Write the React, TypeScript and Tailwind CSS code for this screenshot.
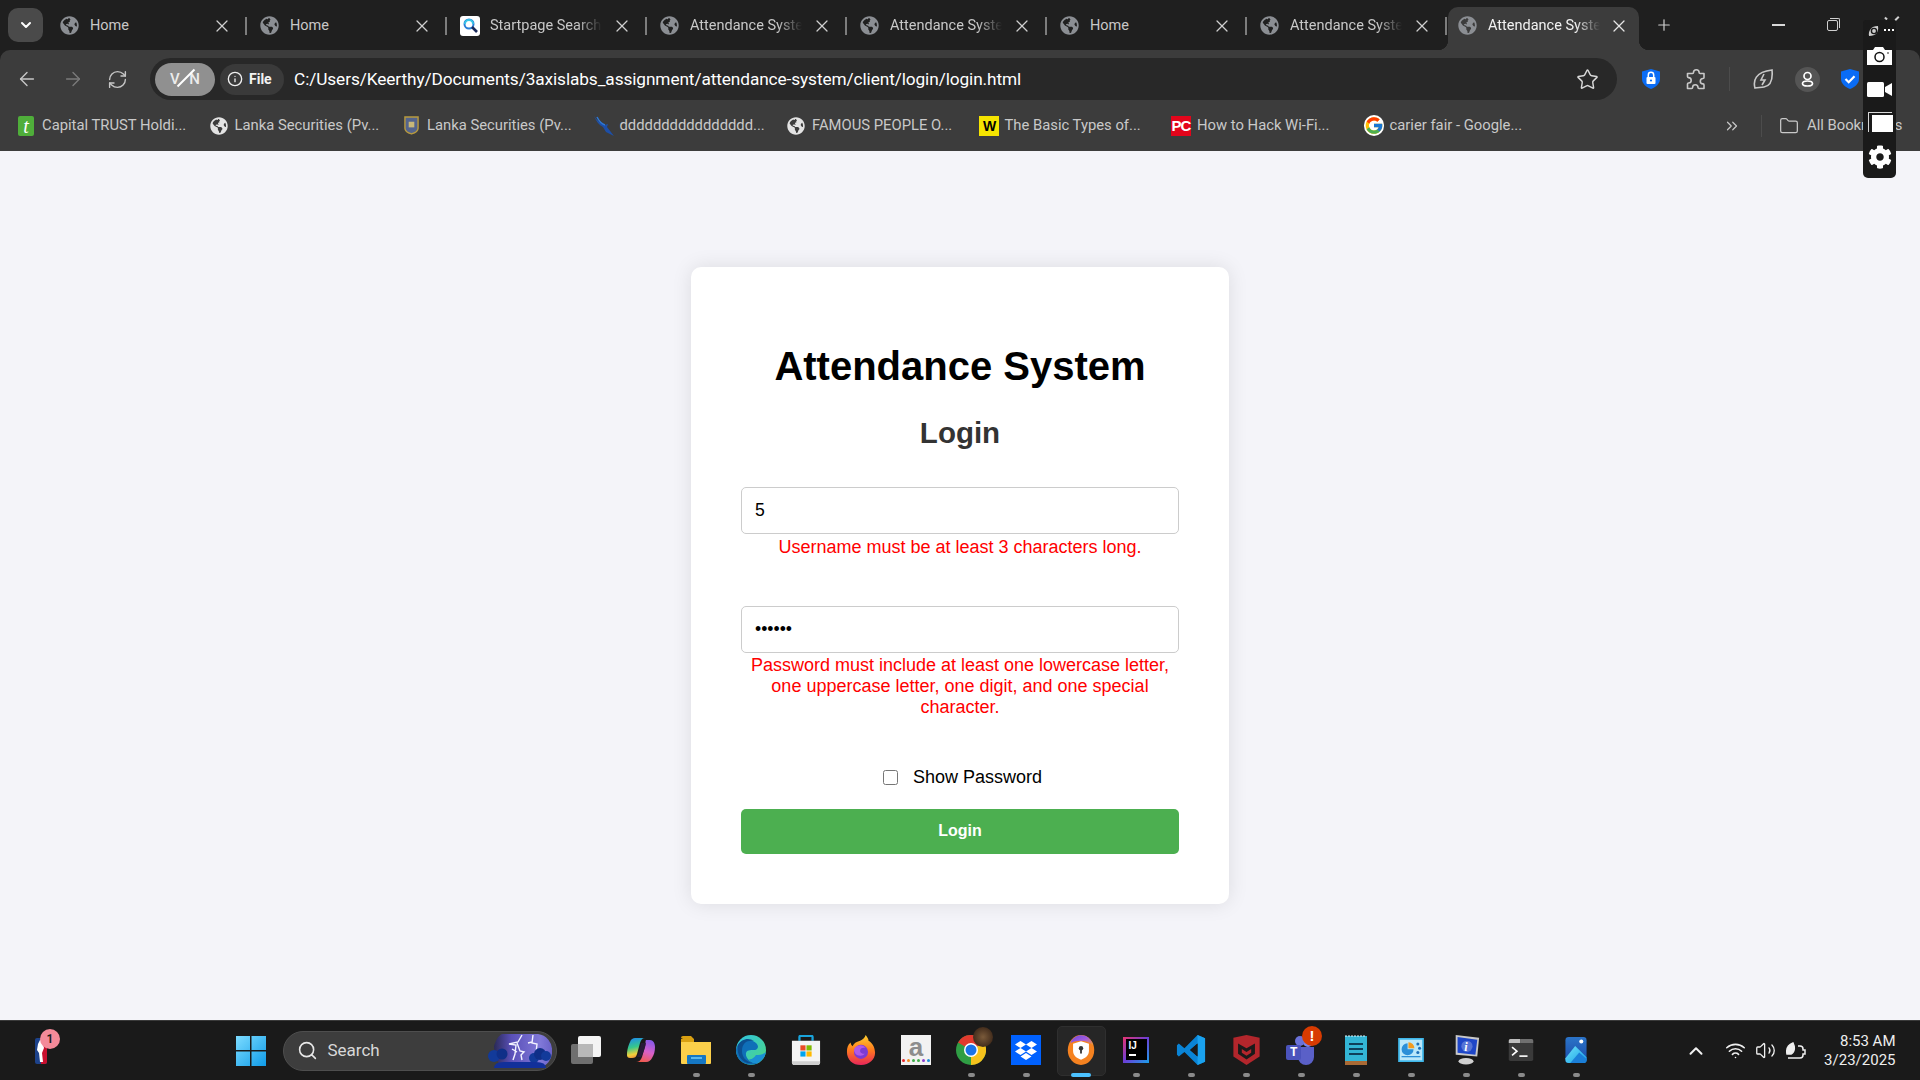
import React from "react";
import { ChevronDown, ChevronUp, ArrowLeft, ArrowRight, X, Plus, Star, Search, Info, RefreshCw, ChevronsRight, Folder, Wifi, Volume2 } from "lucide-react";
import { FaGlobeAmericas, FaCog } from "react-icons/fa";
import { FcGoogle } from "react-icons/fc";

const ui = { fontFamily: "Roboto, 'Noto Sans', sans-serif" };

function TabItem({ title, active, icon, fade }: { title: string; active?: boolean; icon?: React.ReactNode; fade?: boolean }) {
  return (
    <div className={active ? "relative flex h-[43px] w-[191px] ml-[2px] mt-[7px] items-center rounded-t-[10px] bg-[#3c3c3c] pb-[6px]" : "relative flex h-[43px] w-[200px] mt-[7px] items-center pb-[6px]"}>
      {active && <div className="absolute bottom-0 left-[-10px] h-[10px] w-[10px] bg-[radial-gradient(circle_at_0_0,transparent_10px,#3c3c3c_10.500px)]" />}
      {active && <div className="absolute bottom-0 right-[-10px] h-[10px] w-[10px] bg-[radial-gradient(circle_at_100%_0,transparent_10px,#3c3c3c_10.500px)]" />}
      <div className={active ? "flex w-[38px] justify-center" : "flex w-[44px] justify-center pl-[3px]"}>
        {icon ?? <FaGlobeAmericas className="text-[#8b8e93]" size={19} />}
      </div>
      <div
        className={
          (active ? "ml-[2px] text-[#f2f2f2] " : "text-[#c8c8c8] ") +
          "w-[112px] overflow-hidden whitespace-nowrap text-[14.5px] " +
          (fade ? "[mask-image:linear-gradient(90deg,#000_78%,transparent)]" : "")
        }
      >
        {title}
      </div>
      <X className={active ? "ml-[9px] text-[#e6e6e6]" : "ml-[10px] text-[#cfcfcf]"} size={20} strokeWidth={1.5} />
      {!active && <div className="ml-auto mr-[-1px] h-[18px] w-[2px] bg-[#7d7d7d]" />}
    </div>
  );
}

function StartpageIcon() {
  return (
    <svg width="20" height="20" viewBox="0 0 20 20">
      <rect width="20" height="20" rx="3" fill="#fff" />
      <circle cx="9" cy="8" r="4.5" fill="none" stroke="#2a7fd8" strokeWidth="2" />
      <path d="M5 8a4 4 0 0 1 8 0" fill="none" stroke="#38c6e8" strokeWidth="2" />
      <path d="M12 11l5 5" stroke="#1b2a5a" strokeWidth="2.6" />
    </svg>
  );
}

function Bookmark({ icon, text }: { icon: React.ReactNode; text: string }) {
  return (
    <div className="flex w-[192.5px] items-center">
      <div className="flex w-[20px] justify-center">{icon}</div>
      <span className="ml-[6px] whitespace-nowrap text-[14.8px] text-[#c9c9c9]">{text}</span>
    </div>
  );
}

function Shield({ kind }: { kind: "lock" | "check" }) {
  return (
    <svg width="18" height="20" viewBox="0 0 18 20">
      <path d="M9 0L18 2.500V10c0 4.500-4 8-9 10C4 18 0 14.500 0 10V2.500z" fill="#0a6cf5" />
      {kind === "lock" ? (
        <g>
          <rect x="4.500" y="8" width="9" height="7" rx="1" fill="#fff" />
          <path d="M6.300 8V6a2.700 2.700 0 0 1 5.400 0v2" fill="none" stroke="#fff" strokeWidth="1.500" />
          <circle cx="9" cy="11.500" r="1.100" fill="#0a6cf5" />
        </g>
      ) : (
        <path d="M4.500 10l3.200 3.200L13.500 7.200" fill="none" stroke="#fff" strokeWidth="2.200" />
      )}
    </svg>
  );
}

function TabStrip() {
  return (
    <div className="relative flex h-[50px] bg-[#1f1f1f] pl-[8px]">
      <div className="mt-[8px] mr-[3px] flex h-[34px] w-[35px] items-center justify-center rounded-[10px] bg-[#4a4a4a]">
        <ChevronDown size={16} strokeWidth={3} className="text-white" />
      </div>
      <TabItem title="Home" />
      <TabItem title="Home" />
      <TabItem title="Startpage Search Results" fade icon={<StartpageIcon />} />
      <TabItem title="Attendance System" fade />
      <TabItem title="Attendance System" fade />
      <TabItem title="Home" />
      <TabItem title="Attendance System" fade />
      <TabItem title="Attendance System" fade active />
      <div className="ml-[16px] mt-[16px]">
        <Plus size={18} strokeWidth={1.6} className="text-[#cfcfcf]" />
      </div>
      <div className="ml-[99px] mt-[24px] h-[1.500px] w-[13px] bg-[#d8d8d8]" />
      <div className="relative ml-[42px] mt-[20px] h-[11px] w-[11px] rounded-[2px] border border-[#d0d0d0]">
        <div className="absolute -right-[3px] -top-[3px] h-[10px] w-[10px] rounded-tr-[2px] border-r border-t border-[#d0d0d0]" />
      </div>
    </div>
  );
}

function Toolbar() {
  return (
    <div className="flex h-[50px] items-center rounded-t-[10px] bg-[#3c3c3c] pt-[8px]">
      <div className="flex h-[42px] w-[150px] items-center">
        <ArrowLeft size={22} strokeWidth={1.5} className="ml-[16px] text-[#c6c6c6]" />
        <ArrowRight size={22} strokeWidth={1.5} className="ml-[24px] text-[#7b7b7b]" />
        <RefreshCw size={21} strokeWidth={1.6} className="ml-[23px] text-[#c6c6c6]" />
      </div>
      <div className="flex h-[42px] w-[1467px] items-center rounded-full bg-[#282828] pl-[5px]">
        <div className="flex h-[33px] w-[60px] items-center justify-center rounded-full bg-[#909090]">
          <span className="relative flex w-[30px] justify-between text-[15px] font-medium text-[#ececec]">
            <span>V</span>
            <span>N</span>
            <span className="absolute left-[15px] top-[-2px] h-[24px] w-[2px] rotate-[45deg] bg-white" />
          </span>
        </div>
        <div className="ml-[5px] flex h-[31px] w-[64px] items-center rounded-full bg-[#3a3a3a] pl-[7px]">
          <Info size={16} strokeWidth={2} className="text-[#f0f0f0]" />
          <span className="ml-[6px] text-[14px] font-bold text-[#f2f2f2]">File</span>
        </div>
        <span className="ml-[10px] mt-[1px] whitespace-nowrap text-[17.250px] tracking-[-0.1px] text-white">
          C:/Users/Keerthy/Documents/3axislabs_assignment/attendance-system/client/login/login.html
        </span>
        <Star size={23} strokeWidth={1.5} className="ml-auto mr-[18px] text-[#d8d8d8]" />
      </div>
      <div className="ml-[25px]"><Shield kind="lock" /></div>
      <svg className="ml-[25px]" width="22" height="22" viewBox="0 0 22 22" fill="none" stroke="#c9c9c9" strokeWidth="1.600" strokeLinejoin="round">
        <path d="M8.500 4.500a2.800 2.800 0 0 1 5.600 0c0 .7.500 1 1 1h3.900v4c0 .6-.4 1-1 1a2.700 2.700 0 0 0 0 5.400c.6 0 1 .4 1 1v3.600h-5c-.6 0-1-.4-1-1a2.700 2.700 0 0 0-5.400 0c0 .6-.4 1-1 1H2.500v-4.500c0-.6.4-1 1-1a2.700 2.700 0 0 0 0-5.400c-.6 0-1-.4-1-1V5.500h5c.6 0 1-.4 1-1z" />
      </svg>
      <div className="ml-[22px] h-[24px] w-px bg-[#4c4c4c]" />
      <svg className="ml-[22px]" width="22" height="24" viewBox="0 0 22 24" fill="none" stroke="#c9c9c9" strokeWidth="1.600">
        <path d="M3 21c-2-7 0-16 17-18 1 10-2 16-8 17-3 .5-6 .5-9 1z" />
        <path d="M12 7l-3 6h4l-3 5" />
      </svg>
      <div className="ml-[21px] flex h-[25px] w-[25px] items-center justify-center rounded-full bg-[#555555]">
        <svg width="13" height="16" viewBox="0 0 13 16" fill="none" stroke="#fff" strokeWidth="1.700">
          <circle cx="6.500" cy="5" r="3.500" />
          <ellipse cx="6.500" cy="12.500" rx="5" ry="2.500" />
        </svg>
      </div>
      <div className="ml-[21px]"><Shield kind="check" /></div>
    </div>
  );
}

function BookmarksBar() {
  const globe = <FaGlobeAmericas className="text-[#e3e3e3]" size={18} />;
  return (
    <div className="flex h-[51px] items-center bg-[#3c3c3c] pl-[16px]">
      <Bookmark
        icon={
          <div className="flex h-[20px] w-[16px] items-center justify-center rounded-[2px] bg-[#4fae3a] text-[20px] italic leading-none text-white" style={{ fontFamily: "Liberation Serif, serif" }}>t</div>
        }
        text="Capital TRUST Holdi..."
      />
      <Bookmark icon={globe} text="Lanka Securities (Pv..." />
      <Bookmark
        icon={
          <svg width="15" height="19" viewBox="0 0 16 20">
            <path d="M1 1h14v12c0 3-3 5-7 6-4-1-7-3-7-6z" fill="#54648c" stroke="#b89a3e" strokeWidth="1.500" />
            <path d="M5 6h6v6H5z" fill="#c8b878" />
          </svg>
        }
        text="Lanka Securities (Pv..."
      />
      <Bookmark
        icon={
          <svg width="20" height="20" viewBox="0 0 20 20">
            <path d="M0 0c3 5 8 8 11 9l3-1-1 3 7 9-8-4-3-5C5 9 2 5 0 0z" fill="#1d4fa8" />
            <path d="M3 1c2 4 5 7 8 8" fill="none" stroke="#2c78d8" strokeWidth="1.500" />
          </svg>
        }
        text="dddddddddddddddd..."
      />
      <Bookmark icon={globe} text="FAMOUS PEOPLE O..." />
      <Bookmark
        icon={
          <div className="flex h-[20px] w-[20px] items-center justify-center bg-[#f5e400] pl-[2px] text-[14px] font-bold leading-none text-black" style={{ fontFamily: "Liberation Sans, sans-serif" }}>W</div>
        }
        text="The Basic Types of..."
      />
      <Bookmark
        icon={
          <div className="flex h-[20px] w-[20px] items-center justify-center bg-[#e3051b] text-[15px] font-bold leading-none tracking-[-1px] text-white" style={{ fontFamily: "Liberation Sans, sans-serif" }}>PC</div>
        }
        text="How to Hack Wi-Fi..."
      />
      <Bookmark icon={<FcGoogle size={21} className="rounded-full bg-white" />} text="carier fair - Google..." />
      <ChevronsRight size={18} strokeWidth={1.600} className="ml-[167px] text-[#c9c9c9]" />
      <div className="ml-[20px] h-[22px] w-px bg-[#4c4c4c]" />
      <Folder size={20} strokeWidth={1.500} className="ml-[17px] text-[#c9c9c9]" />
      <span className="ml-[8px] whitespace-nowrap text-[14.800px] text-[#c9c9c9]">All Bookmarks</span>
    </div>
  );
}

function Overlay() {
  return (
    <>
      <div className="absolute left-[1885px] top-[17px] h-[3px] w-[2px] rotate-[-45deg] bg-[#d0d0d0]" />
      <div className="absolute left-[1896px] top-[16px] h-[5px] w-[2px] rotate-[45deg] bg-[#d0d0d0]" />
      <div className="absolute left-[1863px] top-[20px] flex h-[158px] w-[33px] flex-col rounded-b-[5px] rounded-t-[3px] bg-[#1a1a1a] text-white">
        <div className="flex h-[20px] items-start pl-[5px] pt-[5px]">
          <svg width="11" height="12" viewBox="0 0 11 12">
            <path d="M1 11C0 6 3 1 10 1c1 6-2 10-9 10z" fill="#cfcfcf" />
            <circle cx="6" cy="6" r="2.600" fill="none" stroke="#1a1a1a" strokeWidth="1.400" />
          </svg>
          <div className="ml-[5px] mt-[4px] flex gap-[2px]">
            <div className="h-[2px] w-[2px] bg-white" />
            <div className="h-[2px] w-[2px] bg-white" />
            <div className="h-[2px] w-[2px] bg-white" />
          </div>
        </div>
        <svg className="ml-[4px] mt-[7px]" width="25" height="18" viewBox="0 0 25 18">
          <path d="M0 3h6l2-3h8l2 3h7v15H0z" fill="#fff" />
          <circle cx="12.500" cy="10" r="4.500" fill="none" stroke="#111" strokeWidth="1.500" />
          <circle cx="21" cy="6" r="0.800" fill="#111" />
        </svg>
        <svg className="ml-[4px] mt-[17px]" width="25" height="15" viewBox="0 0 25 15">
          <rect width="17" height="15" rx="1.500" fill="#fff" />
          <path d="M18 5l7-4v13l-7-4z" fill="#fff" />
        </svg>
        <div className="relative ml-[4.500px] mt-[15px] h-[20px] w-[24px] rounded-tl-[1px] border-l border-t border-[#d9d9d9]">
          <div className="absolute left-[3px] top-[2px] h-[17px] w-[21px] bg-white" />
        </div>
        <FaCog size={24} className="ml-[4.500px] mt-[13px]" />
      </div>
    </>
  );
}

function LoginCard() {
  const errorCls = "text-center text-[18px] leading-[21px] text-[#ff0000]";
  const inputCls = "block h-[47px] w-full rounded-[5px] border-[1.500px] border-[#cccccc] bg-white px-[13px] pb-[1px] text-[17.600px] text-black outline-none";
  return (
    <div className="h-[637px] w-[538px] rounded-[10px] bg-white px-[50px] pt-[76px] shadow-[0_0_20px_rgba(0,0,0,0.1)]" style={{ fontFamily: "'Liberation Sans', Arial, sans-serif" }}>
      <h1 className="text-center text-[40px] font-bold leading-[46px] text-black">Attendance System</h1>
      <h2 className="mt-[27px] text-center text-[29.500px] font-bold leading-[33px] text-[#333333]">Login</h2>
      <input readOnly value="5" className={inputCls + " mt-[38px]"} />
      <p className={errorCls + " mt-[3px]"}>Username must be at least 3 characters long.</p>
      <input readOnly type="password" value="abcdef" className={inputCls + " mt-[48px]"} />
      <p className={errorCls + " mt-[2px]"}>
        Password must include at least one lowercase letter, one uppercase letter, one digit, and one special character.
      </p>
      <label className="mt-[49px] flex h-[21px] items-center justify-center pl-[5px] text-[18px] text-black">
        <input type="checkbox" readOnly className="h-[15px] w-[15px]" />
        <span className="ml-[15px]">Show Password</span>
      </label>
      <button className="mt-[21px] block h-[45px] w-full rounded-[5px] bg-[#4caf50] pb-[2px] text-[16px] font-bold text-white">Login</button>
    </div>
  );
}

/* taskbar icons */
const Windows = () => (
  <svg width="30" height="30" viewBox="0 0 30 30">
    <defs>
      <linearGradient id="win" x1="0" y1="0" x2="1" y2="1">
        <stop offset="0" stopColor="#7ddcff" />
        <stop offset="1" stopColor="#0f9be8" />
      </linearGradient>
    </defs>
    <path d="M0 0h14v14H0zM15.500 0H30v14H15.500zM0 15.500h14V30H0zM15.500 15.500H30V30H15.500z" fill="url(#win)" />
  </svg>
);

const Thumb = () => (
  <svg width="64" height="34" viewBox="0 0 64 34">
    <defs>
      <linearGradient id="sky" x1="0" y1="0" x2="1" y2="0">
        <stop offset="0" stopColor="#2a2a58" />
        <stop offset="0.300" stopColor="#5a50b8" />
        <stop offset="0.800" stopColor="#8078d8" />
        <stop offset="1" stopColor="#6a62c8" />
      </linearGradient>
    </defs>
    <path d="M14 0h36a16 16 0 0 1 14 17 16 16 0 0 1-14 17H14C8 28 6 16 6 12 8 6 10 2 14 0z" fill="url(#sky)" />
    <path d="M34 1l-4 7-9 2 7 1-1 9 -2 6M29 9l3 8 4 1-3 3 1 5M24 15l5 3M45 1l-1 8 5 1-1 9M44 8l-4 1" fill="none" stroke="#f2f2ff" strokeWidth="1.400" />
    <circle cx="6" cy="22" r="6" fill="#123a9a" />
    <circle cx="14" cy="20" r="5.500" fill="#0f2f88" />
    <circle cx="46" cy="24" r="5" fill="#123a9a" />
    <circle cx="52" cy="20" r="6" fill="#0f2f88" />
    <circle cx="58" cy="22" r="5" fill="#123a9a" />
    <path d="M6 34q0-6 10-6h32q10 0 10 6z" fill="#12309a" />
  </svg>
);

const TaskView = () => (
  <svg width="30" height="28" viewBox="0 0 30 28">
    <rect x="0" y="8" width="22" height="20" rx="2" fill="#6f6f6f" />
    <rect x="7" y="0" width="23" height="21" rx="2" fill="#f4f4f4" />
    <rect x="7" y="8" width="15" height="13" fill="#b8b8b8" />
  </svg>
);

const Copilot = () => (
  <svg width="28" height="24" viewBox="0 0 28 24">
    <defs>
      <linearGradient id="cp1" x1="0.300" y1="0" x2="0.500" y2="1">
        <stop offset="0" stopColor="#1f8fe8" />
        <stop offset="0.450" stopColor="#36c88a" />
        <stop offset="0.800" stopColor="#f2d03a" />
        <stop offset="1" stopColor="#f08a3a" />
      </linearGradient>
      <linearGradient id="cp2" x1="0.600" y1="0" x2="0.300" y2="1">
        <stop offset="0" stopColor="#8a5ae8" />
        <stop offset="0.500" stopColor="#d860c8" />
        <stop offset="1" stopColor="#f05a4a" />
      </linearGradient>
    </defs>
    <path d="M8 0h10c-3 0-4 2-5 5l-3 11c-1 3-2 4-5 4H3c-2 0-3-1-3-3 0-6 2-11 3-13C4 1 6 0 8 0z" fill="url(#cp1)" />
    <path d="M19 2h4c3 0 5 3 5 7 0 4-1 8-3 11-1 2-3 4-6 4H9c3 0 5-2 6-5l3-10c1-3 0-6 1-7z" fill="url(#cp2)" />
    <path d="M14 5h5c-1 5-3 11-5 14h-4c2-3 3-9 4-14z" fill="#2a1a40" opacity="0.800" />
  </svg>
);

const FolderApp = () => (
  <svg width="30" height="30" viewBox="0 0 30 30">
    <path d="M0 3a2 2 0 0 1 2-2h8l3 3H2z M0 4h13v6H0z" fill="#d9a012" />
    <path d="M0 7h30v21a1 1 0 0 1-1 1H1a1 1 0 0 1-1-1z" fill="#fbcf4a" />
    <rect x="6" y="20" width="19" height="9" rx="1" fill="#1577c4" />
    <rect x="10" y="22" width="11" height="2" fill="#5ab8ef" />
  </svg>
);

const Edge = () => (
  <svg width="30" height="30" viewBox="0 0 30 30">
    <defs>
      <linearGradient id="eg" x1="0" y1="0" x2="1" y2="1">
        <stop offset="0" stopColor="#2fc4e4" />
        <stop offset="1" stopColor="#4dd67d" />
      </linearGradient>
    </defs>
    <circle cx="15" cy="15" r="15" fill="url(#eg)" />
    <path d="M0 15C1 5 14 2 20 8c4 4 1 7-1 7-6 0-8 0-9 3-1 5 5 11 12 10-7 4-22 1-22-13z" fill="#0f6fb8" />
    <path d="M2 10c3-6 11-8 16-4-7-1-12 2-12 10 0 6 4 11 11 12C8 30 0 22 2 10z" fill="#0c4f90" />
    <path d="M20 20c4 0 8-1 10-3-1 5-4 9-8 11-4 1-8-1-9-4 2 1 5-1 7-4z" fill="#1a8fd4" />
  </svg>
);

const StoreApp = () => (
  <svg width="30" height="30" viewBox="0 0 30 32">
    <path d="M8 6V2a1 1 0 0 1 1-1h12a1 1 0 0 1 1 1v4" fill="none" stroke="#19a4dc" strokeWidth="2.400" />
    <path d="M0 6h30v23a3 3 0 0 1-3 3H3a3 3 0 0 1-3-3z" fill="#f4f4f4" />
    <path d="M0 28h30v1a3 3 0 0 1-3 3H3a3 3 0 0 1-3-3z" fill="#cfcfcf" />
    <rect x="9" y="11" width="5.500" height="5.500" fill="#e94b25" />
    <rect x="15.500" y="11" width="5.500" height="5.500" fill="#7fba00" />
    <rect x="9" y="17.500" width="5.500" height="5.500" fill="#00a4ef" />
    <rect x="15.500" y="17.500" width="5.500" height="5.500" fill="#ffb900" />
  </svg>
);

const Firefox = () => (
  <svg width="30" height="30" viewBox="0 0 30 32">
    <defs>
      <linearGradient id="ff" x1="0.500" y1="0" x2="0.500" y2="1">
        <stop offset="0" stopColor="#ffd02e" />
        <stop offset="0.500" stopColor="#ff7a1e" />
        <stop offset="1" stopColor="#e8265a" />
      </linearGradient>
    </defs>
    <path d="M15 32C6 32 0 26 0 18c0-4 1-8 4-10 0 2 1 3 2 4 1-3 4-5 8-6 3-1 5-3 6-6 2 3 3 4 3 6 4 2 7 7 7 13 0 7-6 13-15 13z" fill="url(#ff)" />
    <circle cx="15" cy="18" r="7.500" fill="#7d3bd4" />
    <path d="M9 13c3-3 9-3 11 1-3-1-6 0-6 3 0 2 2 3 5 3-2 3-9 3-11-2-1-2 0-4 1-5z" fill="#b05ae8" />
  </svg>
);

const AmazonApp = () => (
  <div className="flex h-[30px] w-[30px] flex-col items-center bg-[#f2f2f2]">
    <span className="text-[26px] font-bold leading-[24px] text-[#8d8d8d]" style={{ fontFamily: "'Liberation Sans', sans-serif" }}>a</span>
    <div className="flex gap-[1.500px]">
      <div className="h-[3.500px] w-[3.500px] rounded-full bg-[#e8262a]" />
      <div className="h-[3.500px] w-[3.500px] rounded-full bg-[#f28a1e]" />
      <div className="h-[3.500px] w-[3.500px] rounded-full bg-[#3fae49]" />
      <div className="h-[3.500px] w-[3.500px] rounded-full bg-[#3fae49]" />
      <div className="h-[3.500px] w-[3.500px] rounded-full bg-[#8a3fd0]" />
      <div className="h-[3.500px] w-[3.500px] rounded-full bg-[#1e90d8]" />
    </div>
  </div>
);

const Chrome = () => (
  <div className="relative h-[30px] w-[30px]">
    <svg width="30" height="30" viewBox="0 0 30 30">
      <circle cx="15" cy="15" r="15" fill="#2f9e44" />
      <path d="M15 15L2 7.500A15 15 0 0 1 28 7.500z" fill="#e23a2e" />
      <path d="M15 15L28 7.500A15 15 0 0 1 15 30z" fill="#f6c21c" />
      <circle cx="15" cy="15" r="7" fill="#fff" />
      <circle cx="15" cy="15" r="5.500" fill="#1a73e8" />
    </svg>
    <div className="absolute left-[17px] top-[-8px] h-[20px] w-[20px] rounded-full bg-[radial-gradient(circle,#7a5a3a,#2c1a10)]" />
  </div>
);

const Dropbox = () => (
  <svg width="30" height="30" viewBox="0 0 30 30">
    <rect width="30" height="30" fill="#0061fe" />
    <path d="M9.500 6l5.500 3.500-5.500 3.500L4 9.500zM20.500 6L26 9.500 20.500 13 15 9.500zM9.500 13l5.500 3.500L9.500 20 4 16.500zM20.500 13l5.500 3.500L20.500 20 15 16.500zM9.500 21.500L15 18l5.500 3.500L15 25z" fill="#fff" />
  </svg>
);

const Vault = () => (
  <svg width="28" height="30" viewBox="0 0 30 34">
    <defs>
      <linearGradient id="vlt" x1="0" y1="0" x2="1" y2="1">
        <stop offset="0" stopColor="#6a4ad8" />
        <stop offset="0.500" stopColor="#a05ae0" />
        <stop offset="1" stopColor="#f8a020" />
      </linearGradient>
    </defs>
    <ellipse cx="15" cy="17" rx="15" ry="17" fill="#f58220" />
    <path d="M3 9C8-3 25-3 29 12c-6-6-17-7-26-3z" fill="url(#vlt)" />
    <path d="M15 7l9 3v8c0 5-4 8-9 10-5-2-9-5-9-10v-8z" fill="#fff" />
    <circle cx="15" cy="15" r="2.500" fill="#333" />
    <rect x="14" y="16" width="2" height="5" fill="#333" />
  </svg>
);

const IntelliJ = () => (
  <div className="flex h-[26px] w-[26px] flex-col bg-[linear-gradient(135deg,#e8336e,#6a3fd8,#1aa0e8)] p-[2.500px]">
    <div className="flex h-full w-full flex-col bg-black pl-[3px] pt-[1px]">
      <span className="text-[10px] font-bold leading-[11px] text-white" style={{ fontFamily: "'Liberation Sans', sans-serif" }}>IJ</span>
      <div className="mt-[3px] h-[1.500px] w-[7px] bg-white" />
    </div>
  </div>
);

const VSCode = () => (
  <svg width="30" height="30" viewBox="0 0 30 32">
    <path d="M22 0l8 3.500v25L22 32 8 18l-6 5-2-2V11l2-2 6 5z M22 9l-8 7 8 7z" fill="#0a84d6" fillRule="evenodd" />
    <path d="M22 0l8 3.500v25L22 32z M22 9v14" fill="#1aa2ef" />
    <path d="M14 16l8-7v14z" fill="#1a1a1a" />
  </svg>
);

const McAfee = () => (
  <svg width="27" height="30" viewBox="0 0 28 32">
    <path d="M0 3l14-3 14 3v20l-14 9-14-9z" fill="#b3262c" />
    <path d="M5 9l9 5 9-5v11l-9 6-9-6z" fill="#1a1a1a" />
    <path d="M9 15l5 3 5-3v4l-5 3-5-3z" fill="#b3262c" />
  </svg>
);

const Teams = () => (
  <div className="relative h-[30px] w-[30px]">
    <svg width="30" height="30" viewBox="0 0 30 30">
      <circle cx="22" cy="7" r="5" fill="#7b83eb" />
      <path d="M10 12h18v10a8 8 0 0 1-16 0z" fill="#5a60c8" />
      <circle cx="14" cy="6" r="5" fill="#6b72d8" />
      <rect x="0" y="10" width="15" height="15" rx="2" fill="#4b53bc" />
    </svg>
    <span className="absolute left-[4px] top-[11px] text-[12px] font-bold leading-[13px] text-white">T</span>
    <div className="absolute left-[16px] top-[-9px] flex h-[20px] w-[20px] items-center justify-center rounded-full bg-[#d83b01] text-[15px] font-bold leading-none text-white" style={{ fontFamily: "'Liberation Sans', sans-serif" }}>!</div>
  </div>
);

const Notepad = () => (
  <svg width="22" height="30" viewBox="0 0 22 30">
    <path d="M0 1h22v25H0z" fill="#33b5d5" />
    <path d="M0 26h22v4H0z" fill="#a96a35" />
    <path d="M1 0v2M4 0v2M7 0v2M10 0v2M13 0v2M16 0v2M19 0v2" stroke="#e0f4fa" strokeWidth="1" />
    <path d="M4 9h14M4 14h14M4 19h14" stroke="#0f3f5a" strokeWidth="1.800" />
  </svg>
);

const ChartApp = () => (
  <svg width="30" height="24" viewBox="0 0 30 28">
    <rect width="30" height="28" fill="#3fb7ea" />
    <rect x="2" y="2" width="26" height="24" fill="#b9e7fa" />
    <path d="M11 6a7 7 0 1 0 7 7h-7z" fill="#2a8fd8" />
    <path d="M12 5a7 7 0 0 1 7 7h-7z" fill="#f39a1e" />
    <circle cx="23" cy="7" r="1.800" fill="#1c6fb8" />
    <circle cx="25" cy="12" r="1.800" fill="#1c6fb8" />
    <circle cx="23" cy="17" r="1.800" fill="#1c6fb8" />
    <rect x="4" y="21" width="22" height="1.500" fill="#2a8fd8" />
  </svg>
);

const InfoApp = () => (
  <svg width="28" height="30" viewBox="0 0 28 32">
    <path d="M3 0l25 3-2 20-23-2z" fill="#c8c8c8" />
    <path d="M5 2l21 3-2 16-19-2z" fill="#1e46c8" />
    <circle cx="15" cy="12" r="6" fill="#fff" opacity="0.250" />
    <text x="12" y="17" fontSize="13" fontStyle="italic" fontWeight="700" fill="#fff" fontFamily="Liberation Serif">i</text>
    <ellipse cx="14" cy="28" rx="8" ry="3.500" fill="#d0d0d0" />
  </svg>
);

const Terminal = () => (
  <svg width="30" height="22" viewBox="0 0 30 27">
    <rect width="30" height="27" rx="2" fill="#3a3a3a" />
    <path d="M0 2a2 2 0 0 1 2-2h12v5H0z" fill="#bdbdbd" />
    <path d="M14 0h14a2 2 0 0 1 2 2v3H14z" fill="#707070" />
    <path d="M4 10l6 5-6 5" fill="none" stroke="#fff" strokeWidth="2" />
    <path d="M13 21h10" stroke="#fff" strokeWidth="2" />
  </svg>
);

const Photos = () => (
  <svg width="26" height="26" viewBox="0 0 26 32">
    <defs>
      <linearGradient id="ph" x1="0" y1="0" x2="0" y2="1">
        <stop offset="0" stopColor="#2b74c8" />
        <stop offset="1" stopColor="#1a4aa8" />
      </linearGradient>
      <linearGradient id="ph2" x1="0" y1="0" x2="1" y2="1">
        <stop offset="0" stopColor="#6fe2f8" />
        <stop offset="1" stopColor="#16a0e8" />
      </linearGradient>
    </defs>
    <rect width="26" height="32" rx="4" fill="url(#ph)" />
    <circle cx="19.500" cy="5.500" r="2.500" fill="#fff" />
    <path d="M0 26L12 11l14 14v3a4 4 0 0 1-4 4H4a4 4 0 0 1-4-4z" fill="url(#ph2)" />
    <path d="M6 32l11-13 9 8v1a4 4 0 0 1-4 4z" fill="#1b7fd8" />
  </svg>
);

function AppIcon({ children, dot, active }: { children: React.ReactNode; dot?: boolean; active?: boolean }) {
  return (
    <div className="relative flex h-[50px] w-[55px] items-center justify-center">
      {active && <div className="absolute left-[3px] top-0 h-[50px] w-[49px] rounded-[5px] border border-[#2f2f2f] bg-[#262626]" />}
      <div className="relative mt-[-2px]">{children}</div>
      {dot && !active && <div className="absolute bottom-[-1px] left-[24px] h-[4px] w-[7px] rounded-full bg-[#8a8a8a]" />}
      {active && <div className="absolute bottom-[-1px] left-[17.500px] h-[4px] w-[20px] rounded-full bg-[#4cc2ff]" />}
    </div>
  );
}

function Taskbar() {
  return (
    <div className="flex h-[60px] items-center border-t border-[#3a3a3a] bg-[#1a1a1a]">
      <div className="relative ml-[35px] h-[26px] w-[12px]">
        <svg width="12" height="26" viewBox="0 0 12 26">
          <rect width="12" height="26" rx="2" fill="#1d428a" />
          <path d="M6 0h4a2 2 0 0 1 2 2v22a2 2 0 0 1-2 2H6z" fill="#c8102e" />
          <path d="M5 2c2 0 3 2 3 4l1 4-2 5 1 9H5l-1-9-2-3 1-6z" fill="#fff" />
        </svg>
        <div className="absolute left-[5px] top-[-9px] flex h-[20px] w-[20px] items-center justify-center rounded-full bg-[#f48a99] text-[12px] font-semibold text-[#1a1a1a]">1</div>
      </div>
      <div className="ml-[189px]"><Windows /></div>
      <div className="ml-[16.500px] flex h-[40px] w-[274px] items-center rounded-full border border-[#4e4e4e] bg-[#3d3d3d] pl-[13px] pr-[4px]">
        <Search size={21} strokeWidth={1.800} className="text-[#e8e8e8]" />
        <span className="ml-[10px] text-[17px] text-[#d8d8d8]">Search</span>
        <div className="ml-auto"><Thumb /></div>
      </div>
      <div className="ml-[2px] flex">
        <AppIcon><TaskView /></AppIcon>
        <AppIcon><Copilot /></AppIcon>
        <AppIcon dot><FolderApp /></AppIcon>
        <AppIcon dot><Edge /></AppIcon>
        <AppIcon><StoreApp /></AppIcon>
        <AppIcon><Firefox /></AppIcon>
        <AppIcon><AmazonApp /></AppIcon>
        <AppIcon dot><Chrome /></AppIcon>
        <AppIcon dot><Dropbox /></AppIcon>
        <AppIcon active><Vault /></AppIcon>
        <AppIcon dot><IntelliJ /></AppIcon>
        <AppIcon dot><VSCode /></AppIcon>
        <AppIcon dot><McAfee /></AppIcon>
        <AppIcon dot><Teams /></AppIcon>
        <AppIcon dot><Notepad /></AppIcon>
        <AppIcon dot><ChartApp /></AppIcon>
        <AppIcon dot><InfoApp /></AppIcon>
        <AppIcon dot><Terminal /></AppIcon>
        <AppIcon dot><Photos /></AppIcon>
      </div>
      <ChevronUp size={22} strokeWidth={2.200} className="ml-[81px] text-[#f0f0f0]" />
      <Wifi size={21} strokeWidth={1.800} className="ml-[18px] text-[#f0f0f0]" />
      <Volume2 size={21} strokeWidth={1.500} className="ml-[9px] text-[#f0f0f0]" />
      <svg className="ml-[10px]" width="21" height="20" viewBox="0 0 21 20" fill="none" stroke="#f0f0f0" strokeWidth="1.500">
        <path d="M2 17h12a3 3 0 0 0 3-3v-1h2V9h-2V8a3 3 0 0 0-3-3h-2" />
        <path d="M1 13c-1-5 1-9 6-11 2 4 2 9-2 11z" fill="#f0f0f0" />
      </svg>
      <div className="ml-[21px] flex w-[68px] flex-col items-end text-[15px] leading-[19px] text-[#eeeeee]">
        <span>8:53 AM</span>
        <span>3/23/2025</span>
      </div>
    </div>
  );
}

export default function App() {
  return (
    <div className="relative flex h-[1080px] w-[1920px] flex-col overflow-hidden bg-[#f4f4f9]" style={ui}>
      <header className="bg-[#1f1f1f]">
        <TabStrip />
        <Toolbar />
        <BookmarksBar />
      </header>
      <main className="flex flex-1 justify-center bg-[#f4f4f9] pt-[116px]">
        <LoginCard />
      </main>
      <Taskbar />
      <Overlay />
    </div>
  );
}
